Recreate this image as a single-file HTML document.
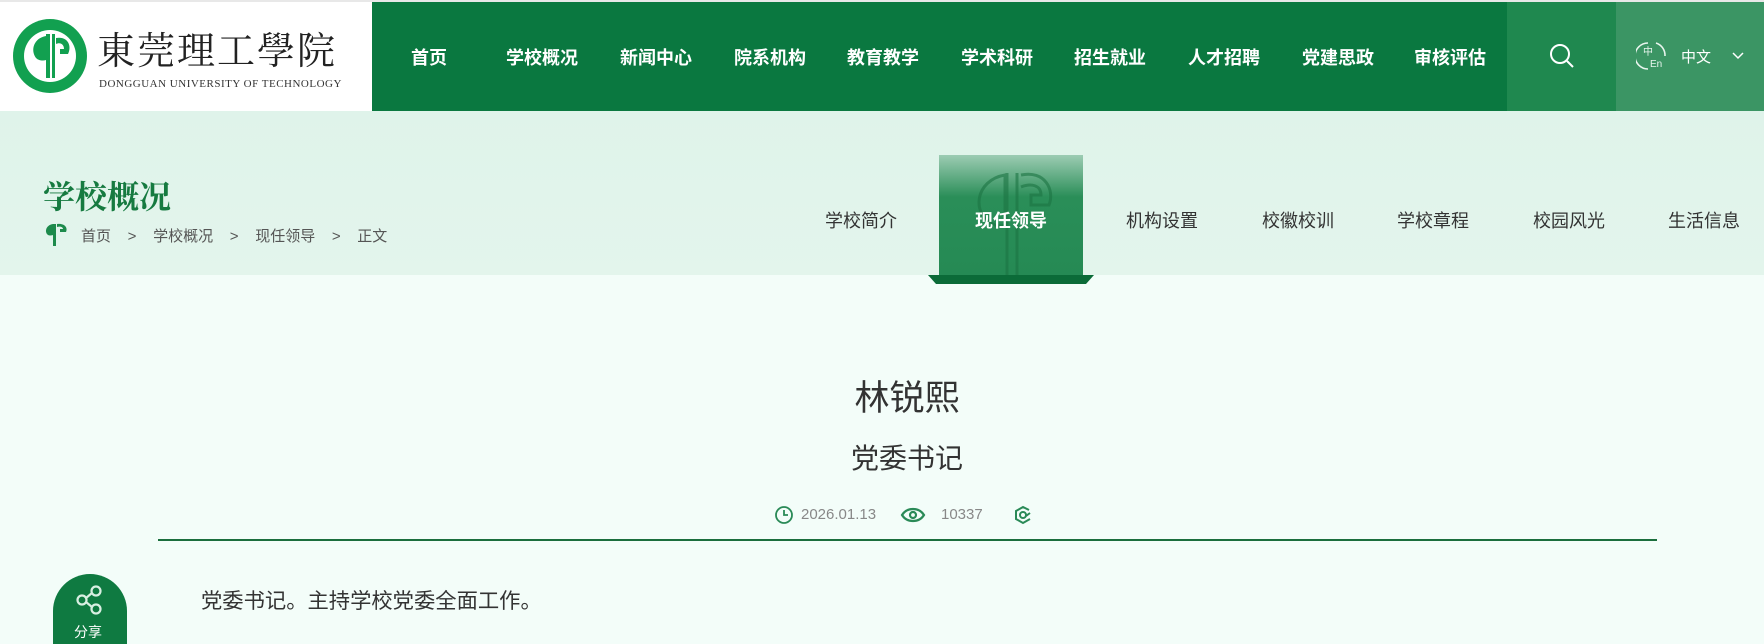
<!DOCTYPE html>
<html><head><meta charset="utf-8"><style>
*{margin:0;padding:0;box-sizing:border-box}
body{width:1764px;height:632px;overflow:hidden;background:#f3fdf9;font-family:"Liberation Sans","Noto Sans CJK SC",sans-serif;position:relative}
.abs{position:absolute}
.hdr{left:0;top:0;width:1764px;height:111px;background:#fff;border-top:2px solid #e8e8e8}
.green{left:372px;top:2px;width:1135px;height:109px;background:#0a7840}
.srch{left:1507px;top:2px;width:109px;height:109px;background:#1f884f}
.lang{left:1616px;top:2px;width:148px;height:109px;background:#3b9564}
.nav{top:44px;color:#fff;font-weight:bold;font-size:18px;transform:translateX(-50%);white-space:nowrap}
.banner{left:0;top:111px;width:1764px;height:164px;background:linear-gradient(180deg,#dff3ea,#e3f5ec)}
.sub{top:207px;font-size:18px;color:#333;transform:translateX(-50%);white-space:nowrap}
</style></head><body>
<div class="abs hdr"></div>
<svg class="abs" style="left:12px;top:18px" width="76" height="76" viewBox="0 0 76 76">
<circle cx="38" cy="38" r="37" fill="#12a050"/><circle cx="38" cy="38" r="26" fill="#fff"/>
<path d="M34 18 C22 20 18 32 24 40 C28 44 34 42 34 42 Z" fill="#12a050"/>
<rect x="34" y="16" width="4" height="44" fill="#12a050"/><rect x="40" y="16" width="3" height="44" fill="#12a050"/>
<path d="M44 20 C56 18 60 28 56 36 L48 36 L48 31 L52 31 C52 26 48 24 44 26 Z" fill="#12a050"/>
</svg>
<div class="abs" style="left:97px;top:24px;font-family:'Noto Serif CJK SC',serif;font-size:38px;color:#222;letter-spacing:2px;line-height:48px;white-space:nowrap">東莞理工學院</div>
<div class="abs" style="left:99px;top:78px;font-family:'Liberation Serif',serif;font-size:11px;color:#333;letter-spacing:0.5px">DONGGUAN UNIVERSITY OF TECHNOLOGY</div>
<div class="abs green"></div><div class="abs srch"></div><div class="abs lang"></div>
<div class="abs nav" style="left:429px">首页</div>
<div class="abs nav" style="left:542px">学校概况</div>
<div class="abs nav" style="left:656px">新闻中心</div>
<div class="abs nav" style="left:770px">院系机构</div>
<div class="abs nav" style="left:883px">教育教学</div>
<div class="abs nav" style="left:997px">学术科研</div>
<div class="abs nav" style="left:1110px">招生就业</div>
<div class="abs nav" style="left:1224px">人才招聘</div>
<div class="abs nav" style="left:1338px">党建思政</div>
<div class="abs nav" style="left:1450px">审核评估</div>
<svg class="abs" style="left:1548px;top:42px" width="28" height="28" viewBox="0 0 28 28" fill="none" stroke="#fff" stroke-width="2"><circle cx="12" cy="12" r="9"/><path d="M19 19l6 6"/></svg>
<svg class="abs" style="left:1636px;top:40px" width="32" height="32" viewBox="0 0 32 32" fill="none" stroke="#e8f5ee" stroke-width="1.6"><path d="M12 3A13 13 0 0 0 12 29"/><path d="M20 3A13 13 0 0 1 29 16"/><text x="7" y="15" font-size="10" fill="#e8f5ee" stroke="none">中</text><text x="14" y="27" font-size="10" fill="#e8f5ee" stroke="none">En</text></svg>
<div class="abs" style="left:1681px;top:46px;color:#fff;font-size:15px">中文</div>
<svg class="abs" style="left:1732px;top:52px" width="12" height="8" viewBox="0 0 12 8" fill="none" stroke="#fff" stroke-width="1.5"><path d="M1 1l5 5 5-5"/></svg>

<div class="abs banner"></div>
<div class="abs" style="left:43px;top:172px;font-size:32px;font-weight:bold;color:#167a40;font-family:'Noto Serif CJK SC',serif">学校概况</div>
<svg class="abs" style="left:43px;top:222px" width="26" height="24" viewBox="0 0 26 24"><path d="M10 2C3 3 1 10 5 13C7 14 10 13 10 13Z" fill="#1d8a4c"/><rect x="10" y="2" width="3" height="22" fill="#1d8a4c"/><path d="M14 2C22 1 25 6 23 10L17 10L17 7L20 7C20 5 17 4 14 5Z" fill="#1d8a4c"/></svg>
<div class="abs" style="left:81px;top:225px;font-size:15px;color:#555;white-space:pre">首页    &gt;    学校概况    &gt;    现任领导    &gt;    正文</div>
<div class="abs" style="left:939px;top:155px;width:144px;height:120px;background:linear-gradient(180deg,rgba(30,130,75,0.35),#2a8e58 35%,#258a54)"></div>
<svg class="abs" style="left:965px;top:165px" width="100" height="110" viewBox="0 0 100 110" fill="none" stroke="#1c7443" stroke-width="3" opacity="0.6"><path d="M40 10C10 15 5 50 30 60C36 62 40 60 40 60Z"/><path d="M42 8V110M52 8V110"/><path d="M56 10C80 5 90 25 84 40L66 40L66 30L76 30C76 20 66 18 56 22"/></svg>
<svg class="abs" style="left:928px;top:275px" width="166" height="10" viewBox="0 0 166 10"><path d="M0 0H166L158 9H8Z" fill="#0b6b38"/></svg>
<div class="abs sub" style="left:861px">学校简介</div>
<div class="abs sub" style="left:1011px;color:#fff;font-weight:bold">现任领导</div>
<div class="abs sub" style="left:1162px">机构设置</div>
<div class="abs sub" style="left:1298px">校徽校训</div>
<div class="abs sub" style="left:1433px">学校章程</div>
<div class="abs sub" style="left:1569px">校园风光</div>
<div class="abs sub" style="left:1704px">生活信息</div>

<div class="abs" style="left:0;width:1814px;top:370px;text-align:center;font-size:35px;color:#333">林锐熙</div>
<div class="abs" style="left:0;width:1814px;top:437px;text-align:center;font-size:28px;color:#333">党委书记</div>
<svg class="abs" style="left:774px;top:505px" width="20" height="20" viewBox="0 0 20 20" fill="none" stroke="#2a8a57" stroke-width="1.8"><circle cx="10" cy="10" r="8"/><path d="M10 5v5h4"/></svg>
<div class="abs" style="left:801px;top:506px;font-size:15px;color:#888">2026.01.13</div>
<svg class="abs" style="left:900px;top:505px" width="26" height="20" viewBox="0 0 26 20" fill="none" stroke="#2a8a57" stroke-width="2.2"><path d="M2 10C7 2 19 2 24 10C19 18 7 18 2 10Z"/><circle cx="13" cy="10" r="3"/></svg>
<div class="abs" style="left:941px;top:506px;font-size:15px;color:#888">10337</div>
<svg class="abs" style="left:1013px;top:505px" width="20" height="20" viewBox="0 0 20 20" fill="none" stroke="#2a8a57" stroke-width="2"><path d="M16 5L10 2 3 6V14L10 18 17 14"/><circle cx="10" cy="10" r="3"/><path d="M13 11L17 8"/></svg>
<div class="abs" style="left:158px;top:539px;width:1499px;height:2px;background:#1a6e3d"></div>
<div class="abs" style="left:53px;top:574px;width:74px;height:70px;background:#0f7a41;border-radius:37px 37px 0 0"></div>
<svg class="abs" style="left:74px;top:584px" width="32" height="32" viewBox="0 0 32 32" fill="none" stroke="#d8efe2" stroke-width="2.2"><circle cx="22" cy="7" r="4.5"/><circle cx="8" cy="16" r="4.5"/><circle cx="22" cy="25" r="4.5"/><path d="M12 14L18 9M12 18L18 23"/></svg>
<div class="abs" style="left:74px;top:622px;color:#fff;font-size:14px">分享</div>
<div class="abs" style="left:201px;top:584px;font-size:21.3px;color:#333">党委书记。主持学校党委全面工作。</div>
</body></html>
